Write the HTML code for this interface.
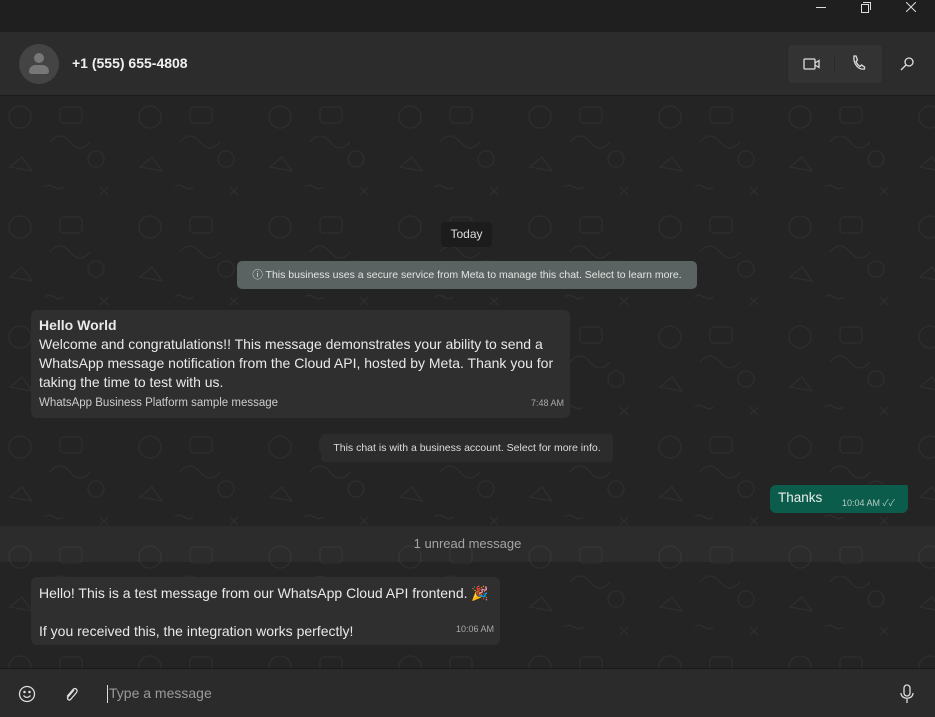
<!DOCTYPE html>
<html><head><meta charset="utf-8"><style>
*{margin:0;padding:0;box-sizing:border-box}
body{width:935px;height:717px;overflow:hidden;background:#232323;font-family:"Liberation Sans","Noto Sans CJK SC",sans-serif;color:#e9e9e9;position:relative}
.abs{position:absolute}
#title{left:0;top:0;width:935px;height:32px;background:#1f1f1f}
#hdr{left:0;top:32px;width:935px;height:64px;background:#2c2c2c;border-bottom:1px solid #1b1b1b}
#chat{left:0;top:97px;width:935px;height:571px;background:#242424}
.bub{background:#2f2f2f;border-radius:6px;font-size:14px;line-height:19px}
.time{font-size:9px;color:#a9a9a9}
#inp{left:0;top:668px;width:935px;height:49px;background:#2b2b2b;border-top:1px solid #1a1a1a}
</style></head><body>
<div id="title" class="abs">
 <div class="abs" style="left:816px;top:7px;width:10px;height:1px;background:#ddd"></div>
 <div class="abs" style="left:861px;top:4px;width:8px;height:9px;border:1px solid #ddd"></div>
 <div class="abs" style="left:863px;top:2px;width:8px;height:8px;border-top:1px solid #ddd;border-right:1px solid #ddd"></div>
 <svg class="abs" style="left:906px;top:2px" width="10" height="10" viewBox="0 0 10 10" stroke="#ddd" stroke-width="1"><path d="M0 0L10 10M10 0L0 10"/></svg>
</div>
<div id="hdr" class="abs">
 <div class="abs" style="left:19px;top:12px;width:40px;height:40px;border-radius:50%;background:#444">
  <div class="abs" style="left:15px;top:9px;width:10px;height:10px;border-radius:50%;background:#777"></div>
  <div class="abs" style="left:10px;top:21px;width:20px;height:9px;border-radius:8px 8px 3px 3px;background:#777"></div>
 </div>
 <div class="abs" style="left:72px;top:23px;font-size:14px;font-weight:bold;color:#f0f0f0">+1 (555) 655-4808</div>
 <div class="abs" style="left:787px;top:12px;width:96px;height:40px;background:#333;border-radius:4px;border:1px solid #2a2a2a"></div>
 <div class="abs" style="left:834px;top:22px;width:1px;height:20px;background:#2a2a2a"></div>
 <svg class="abs" style="left:802px;top:24px" width="20" height="16" viewBox="0 0 20 16" fill="none" stroke="#ddd" stroke-width="1.3"><rect x="2" y="3" width="11" height="10" rx="1"/><path d="M13 7l4-2.5v7L13 9"/></svg>
 <svg class="abs" style="left:850px;top:22px" width="16" height="18" viewBox="0 0 16 18" fill="none" stroke="#ddd" stroke-width="1.3"><path d="M4 2l2 0 1.5 4-1.5 1.5c1 2.5 2.5 4 4 5l1.5-1.5 3 2v2c-6 1-11.5-5-10.5-13z"/></svg>
 <svg class="abs" style="left:899px;top:24px" width="16" height="16" viewBox="0 0 16 16" fill="none" stroke="#ddd" stroke-width="1.3"><circle cx="10" cy="6" r="4"/><path d="M7 9l-5 5"/></svg>
</div>
<div id="chat" class="abs">
 <svg class="abs" style="left:0;top:0;opacity:.045" width="935" height="571"><defs><pattern id="p" width="130" height="110" patternUnits="userSpaceOnUse"><g fill="none" stroke="#fff" stroke-width="1.3"><circle cx="20" cy="20" r="11"/><rect x="60" y="10" width="22" height="16" rx="4"/><path d="M10 70l12-10 10 14z"/><circle cx="96" cy="62" r="8"/><path d="M45 90c6-6 12 6 18 0"/><path d="M100 90l8 8M108 90l-8 8"/><path d="M50 45q10-12 20 0t20 0"/></g></pattern></defs><rect width="935" height="571" fill="url(#p)"/></svg>
 <div class="abs" style="left:441px;top:125px;width:51px;height:25px;background:#1c1c1c;border-radius:4px;font-size:12px;color:#ddd;text-align:center;line-height:25px">Today</div>
 <div class="abs" style="left:237px;top:164px;width:460px;height:28px;background:#5a6361;border-radius:5px;font-size:10.5px;color:#e4e4e4;text-align:center;line-height:28px">ⓘ This business uses a secure service from Meta to manage this chat. Select to learn more.</div>
 <div class="abs bub" style="left:31px;top:213px;width:539px;height:108px;padding:6px 8px">
  <div style="font-weight:bold">Hello World</div>
  <div>Welcome and congratulations!! This message demonstrates your ability to send a WhatsApp message notification from the Cloud API, hosted by Meta. Thank you for taking the time to test with us.</div>
  <div style="font-size:11.5px;color:#ccc;margin-top:2px">WhatsApp Business Platform sample message</div>
  <div class="abs time" style="right:6px;bottom:5px">7:48 AM</div>
 </div>
 <div class="abs" style="left:321px;top:337px;width:292px;height:28px;background:#2c2c2c;border-radius:4px;font-size:10.5px;color:#ddd;text-align:center;line-height:28px">This chat is with a business account. Select for more info.</div>
 <div class="abs" style="left:770px;top:388px;width:138px;height:28px;background:#0b5c4a;border-radius:6px 2px 6px 6px">
  <div class="abs" style="left:8px;top:5px;font-size:13.5px;color:#eee">Thanks</div>
  <div class="abs time" style="left:72px;top:11px;color:#b5cfc8">10:04 AM ✓✓</div>
 </div>
 <div class="abs" style="left:0;top:429px;width:935px;height:36px;background:rgba(255,255,255,.04);text-align:center;font-size:13px;color:#a5a5a5;line-height:36px">1 unread message</div>
 <div class="abs bub" style="left:31px;top:480px;width:469px;height:68px;padding:7px 8px">
  <div>Hello! This is a test message from our WhatsApp Cloud API frontend. 🎉</div>
  <div style="margin-top:19px">If you received this, the integration works perfectly!</div>
  <div class="abs time" style="right:6px;bottom:6px">10:06 AM</div>
 </div>
</div>
<div id="inp" class="abs">
 <svg class="abs" style="left:18px;top:16px" width="18" height="18" viewBox="0 0 18 18" fill="none" stroke="#ddd" stroke-width="1.3"><circle cx="9" cy="9" r="7.5"/><circle cx="6.5" cy="7" r=".6" fill="#ddd"/><circle cx="11.5" cy="7" r=".6" fill="#ddd"/><path d="M5.5 10.5c2 2.5 5 2.5 7 0"/></svg>
 <svg class="abs" style="left:62px;top:16px" width="18" height="18" viewBox="0 0 18 18" fill="none" stroke="#ddd" stroke-width="1.3"><path d="M12 5l-6 7c-1.5 2 1 4 2.5 2.5l6-7c2-2.5-1.5-5.5-3.5-3l-6 7"/></svg>
 <div class="abs" style="left:107px;top:16px;width:1px;height:18px;background:#ddd"></div>
 <div class="abs" style="left:109px;top:16px;font-size:14px;color:#9a9a9a">Type a message</div>
 <svg class="abs" style="left:898px;top:15px" width="18" height="20" viewBox="0 0 18 20" fill="none" stroke="#ddd" stroke-width="1.3"><rect x="6" y="1" width="6" height="11" rx="3"/><path d="M3 9c0 7 12 7 12 0M9 15v4"/></svg>
</div>
</body></html>
